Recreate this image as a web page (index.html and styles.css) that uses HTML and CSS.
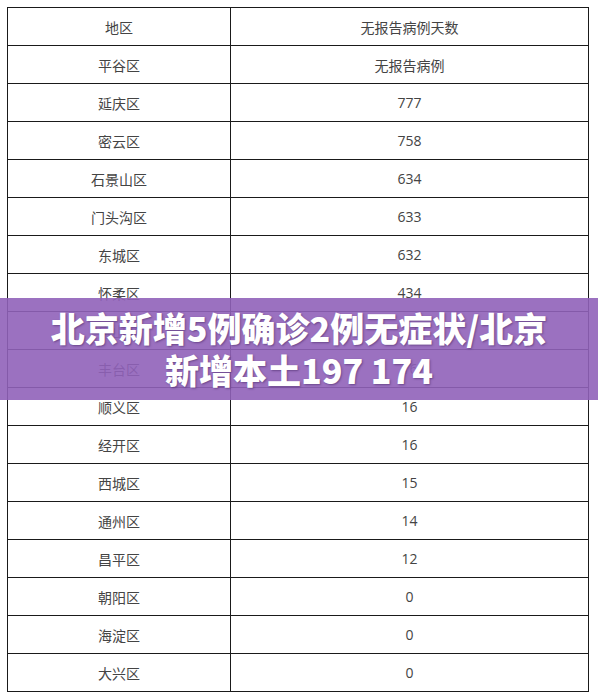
FILE: index.html
```html
<!DOCTYPE html>
<html lang="zh">
<head>
<meta charset="utf-8">
<link rel="stylesheet" href="styles.css">
</head>
<body>
<div class="page">
<table class="data">
<tr><td>地区</td><td>无报告病例天数</td></tr>
<tr><td>平谷区</td><td>无报告病例</td></tr>
<tr><td>延庆区</td><td>777</td></tr>
<tr><td>密云区</td><td>758</td></tr>
<tr><td>石景山区</td><td>634</td></tr>
<tr><td>门头沟区</td><td>633</td></tr>
<tr><td>东城区</td><td>632</td></tr>
<tr><td>怀柔区</td><td>434</td></tr>
<tr><td>房山区</td><td>17</td></tr>
<tr><td>丰台区</td><td>16</td></tr>
<tr><td>顺义区</td><td>16</td></tr>
<tr><td>经开区</td><td>16</td></tr>
<tr><td>西城区</td><td>15</td></tr>
<tr><td>通州区</td><td>14</td></tr>
<tr><td>昌平区</td><td>12</td></tr>
<tr><td>朝阳区</td><td>0</td></tr>
<tr><td>海淀区</td><td>0</td></tr>
<tr><td>大兴区</td><td>0</td></tr>
</table>
<div class="banner">
<div class="banner-text">北京新增5例确诊2例无症状/北京<br>新增本土197 174</div>
</div>
</div>
</body>
</html>
```

FILE: styles.css
```css
html, body {
  margin: 0;
  padding: 0;
  background: #ffffff;
}
.page {
  position: relative;
  width: 598px;
  height: 699px;
  padding: 7px 0 0 7px;
  box-sizing: border-box;
}
.data {
  border-collapse: collapse;
  width: 582px;
  table-layout: fixed;
  font-family: "Open Sans", "Noto Sans CJK SC", sans-serif;
  font-size: 14px;
  color: #444444;
}
.data td {
  border: 1px solid #1a1a1a;
  height: 37px;
  padding: 0;
  text-align: center;
  vertical-align: middle;
}
.data td:first-child {
  width: 222px;
}
.banner {
  position: absolute;
  left: 0;
  top: 298px;
  width: 598px;
  height: 102px;
  background: rgba(144, 98, 185, 0.9);
  display: flex;
  align-items: center;
  justify-content: center;
}
.banner-text {
  font-family: "Noto Sans CJK SC", sans-serif;
  font-weight: 900;
  font-size: 34px;
  line-height: 42px;
  color: #ffffff;
  text-align: center;
  text-shadow: 1px 1px 2px rgba(60, 30, 90, 0.5);
}
```
